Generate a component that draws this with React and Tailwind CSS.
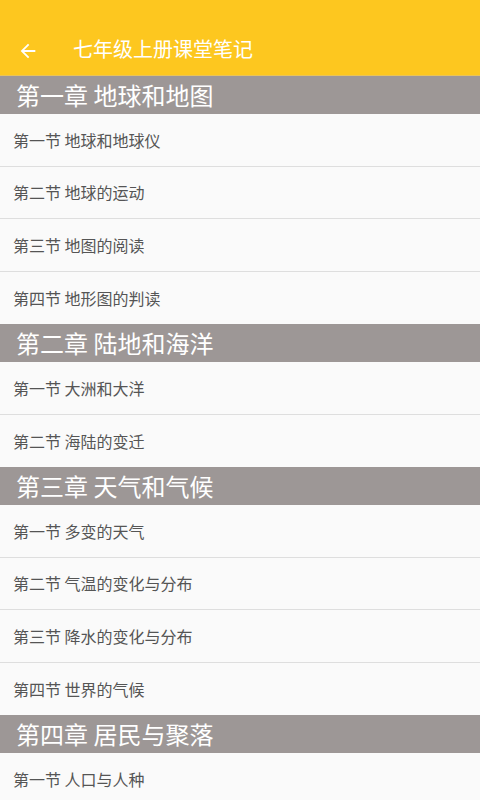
import React from 'react';

const chapters = [
    { title: '第一章 地球和地图', sections: ['第一节 地球和地球仪', '第二节 地球的运动', '第三节 地图的阅读', '第四节 地形图的判读'] },
    { title: '第二章 陆地和海洋', sections: ['第一节 大洲和大洋', '第二节 海陆的变迁'] },
    { title: '第三章 天气和气候', sections: ['第一节 多变的天气', '第二节 气温的变化与分布', '第三节 降水的变化与分布', '第四节 世界的气候'] },
    { title: '第四章 居民与聚落', sections: ['第一节 人口与人种'] },
];

const font = { fontFamily: '"Noto Sans CJK SC", "Noto Sans", sans-serif' };

const App = () => {
    return (
        <div className="w-[480px] h-[800px] overflow-hidden bg-[#fafafa]" style={font}>
            <div className="h-[76px] bg-[#fdc71f] flex items-end pb-[13px] border-b border-[#e8c35a]">
                <div className="w-[56px] flex justify-center">
                    <svg width="22" height="22" viewBox="0 0 24 24" fill="#fff">
                        <path d="M20 11H7.83l5.59-5.59L12 4l-8 8 8 8 1.41-1.41L7.83 13H20v-2z" />
                    </svg>
                </div>
                <h1 className="ml-[17px] text-[20px] leading-[26px] text-white">七年级上册课堂笔记</h1>
            </div>
            {chapters.map((ch) => (
                <div key={ch.title}>
                    <div className="h-[38px] bg-[#9d9796] flex items-center pl-[16px] text-[24px] text-white leading-none">
                        {ch.title}
                    </div>
                    {ch.sections.map((s, i) => (
                        <div
                            key={s}
                            className={`h-[52.5px] flex items-center pl-[13px] text-[16px] text-[#555] bg-[#fafafa] ${i < ch.sections.length - 1 ? 'border-b border-[#dedede]' : ''}`}
                        >
                            {s}
                        </div>
                    ))}
                </div>
            ))}
        </div>
    );
};

export default App;
